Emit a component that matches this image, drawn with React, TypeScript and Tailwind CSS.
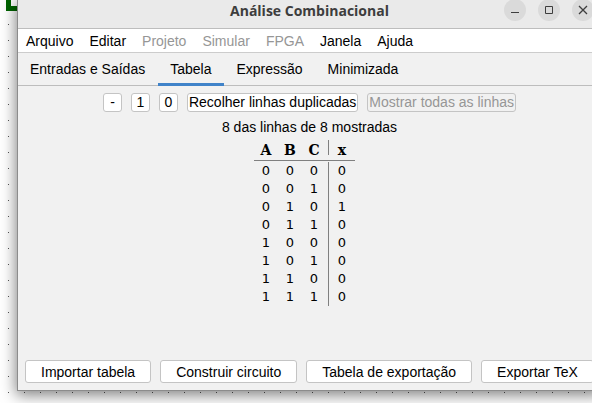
import React from "react";

const menus = [
  { label: "Arquivo", disabled: false },
  { label: "Editar", disabled: false },
  { label: "Projeto", disabled: true },
  { label: "Simular", disabled: true },
  { label: "FPGA", disabled: true },
  { label: "Janela", disabled: false },
  { label: "Ajuda", disabled: false },
];

const tabs = ["Entradas e Saídas", "Tabela", "Expressão", "Minimizada"];

const rows = [
  [0, 0, 0, 0],
  [0, 0, 1, 0],
  [0, 1, 0, 1],
  [0, 1, 1, 0],
  [1, 0, 0, 0],
  [1, 0, 1, 0],
  [1, 1, 0, 0],
  [1, 1, 1, 0],
];

const actions = ["Importar tabela", "Construir circuito", "Tabela de exportação", "Exportar TeX"];

function CanvasGrid() {
  return (
    <svg className="absolute inset-0 h-full w-full" aria-hidden="true" shapeRendering="crispEdges">
      <defs>
        <pattern id="dots" width="16" height="16" patternUnits="userSpaceOnUse">
          <rect x="8" y="8" width="1" height="1" fill="#555" />
        </pattern>
      </defs>
      <rect width="100%" height="100%" fill="url(#dots)" />
      <path d="M8.5 0V8.5H24" fill="none" stroke="#006400" strokeWidth="5" />
    </svg>
  );
}

function WindowButton({ label, children }: { label: string; children: React.ReactNode }) {
  return (
    <button type="button" aria-label={label} className="flex size-[22px] items-center justify-center rounded-full bg-[#dadada]">
      <svg width="12" height="12" viewBox="0 0 12 12" fill="none" stroke="#3d3d3d">
        {children}
      </svg>
    </button>
  );
}

function SmallButton({ label, disabled = false }: { label: string; disabled?: boolean }) {
  const single = label.length === 1;
  return (
    <button
      type="button"
      disabled={disabled}
      className={`h-[19px] rounded-[3px] border border-[#c4c4c4] leading-[17px] whitespace-nowrap ${single ? "w-[19px]" : "px-px"} ${
        disabled ? "bg-[#f1f1f1] text-[#969696]" : "bg-white"
      }`}
    >
      {label}
    </button>
  );
}

export default function App() {
  return (
    <div className="relative h-screen overflow-hidden bg-white pb-3 pl-[17px] font-['Liberation_Sans',sans-serif] text-[14px] leading-4 text-black">
      <CanvasGrid />
      <main className="relative -mr-[9px] flex h-full flex-col border-b border-l border-[#8c8c8c] bg-[#f1f1f1] shadow-[0_3px_14px_1px_rgba(0,0,0,0.5)]">
        <header className="relative flex h-[29px] shrink-0 justify-center border-b border-[#bdbdbd] bg-[#eaeaea]">
          <h1 className="pt-[2px] font-['Open_Sans',sans-serif] text-[14px] leading-[18px] font-bold text-[#3d3d3d]">
            Análise Combinacional
          </h1>
          <div className="absolute -top-px right-[7px] flex gap-3">
            <WindowButton label="Minimizar">
              <path d="M2 8.5H10" />
            </WindowButton>
            <WindowButton label="Maximizar">
              <path d="M2.5 2.5H9.5V9.5H2.5Z" />
            </WindowButton>
            <WindowButton label="Fechar">
              <path d="M2 2L10 10M10 2L2 10" strokeWidth="1.3" />
            </WindowButton>
          </div>
        </header>

        <nav className="flex h-6 shrink-0 items-center gap-4 border-b border-[#cccccc] bg-white px-2">
          {menus.map((m) => (
            <button key={m.label} type="button" disabled={m.disabled} className="disabled:text-[#969696]">
              {m.label}
            </button>
          ))}
        </nav>

        <div role="tablist" className="flex h-[33px] shrink-0 border-b border-[#bdbdbd]">
          {tabs.map((t) => (
            <button
              key={t}
              type="button"
              role="tab"
              aria-selected={t === "Tabela"}
              className={`-mb-px border-b-[3px] pt-0.5 pr-[13px] pl-3 ${t === "Tabela" ? "border-[#4083c9]" : "border-transparent"}`}
            >
              {t}
            </button>
          ))}
        </div>

        <section className="flex flex-1 flex-col items-center pt-[7px]">
          <div className="flex gap-[9px]">
            <SmallButton label="-" />
            <SmallButton label="1" />
            <SmallButton label="0" />
            <SmallButton label="Recolher linhas duplicadas" />
            <SmallButton label="Mostrar todas as linhas" disabled />
          </div>
          <p className="pt-[7px]">8 das linhas de 8 mostradas</p>

          <table className="mt-[5px] mr-[10px] border-separate border-spacing-0 text-center">
            <colgroup>
              <col className="w-6" />
              <col className="w-6" />
              <col className="w-[26px]" />
              <col className="w-[27px]" />
            </colgroup>
            <thead className="font-['DejaVu_Serif',serif] text-[14px]">
              <tr>
                {["A", "B", "C"].map((h) => (
                  <th
                    key={h}
                    className={`border-b border-[#808080] p-0 pt-[3px] pb-0.5 leading-[15px] font-bold ${h === "C" ? "pr-0.5" : ""}`}
                  >
                    {h}
                  </th>
                ))}
                <th className="border-b border-[#808080] p-0 pb-[5px] font-bold">
                  <span className="block h-[15px] border-l border-[#808080] pt-[3px] leading-[15px]">x</span>
                </th>
              </tr>
            </thead>
            <tbody className="font-['DejaVu_Sans',sans-serif] text-[13px]">
              <tr aria-hidden="true">
                <td colSpan={4} className="h-px p-0" />
              </tr>
              {rows.map((r) => (
                <tr key={r.join("")}>
                  {r.map((v, i) => (
                    <td
                      key={i}
                      className={`h-[18px] p-0 leading-[18px] ${i === 2 ? "pr-0.5" : ""} ${i === 3 ? "border-l border-[#808080]" : ""}`}
                    >
                      {v}
                    </td>
                  ))}
                </tr>
              ))}
            </tbody>
          </table>
        </section>

        <footer className="flex shrink-0 gap-[9px] px-[7px] pb-[7px]">
          {actions.map((a) => (
            <button key={a} type="button" className="h-[23px] rounded-[3px] border border-[#c4c4c4] bg-white px-[15px] whitespace-nowrap">
              {a}
            </button>
          ))}
        </footer>
      </main>
    </div>
  );
}
